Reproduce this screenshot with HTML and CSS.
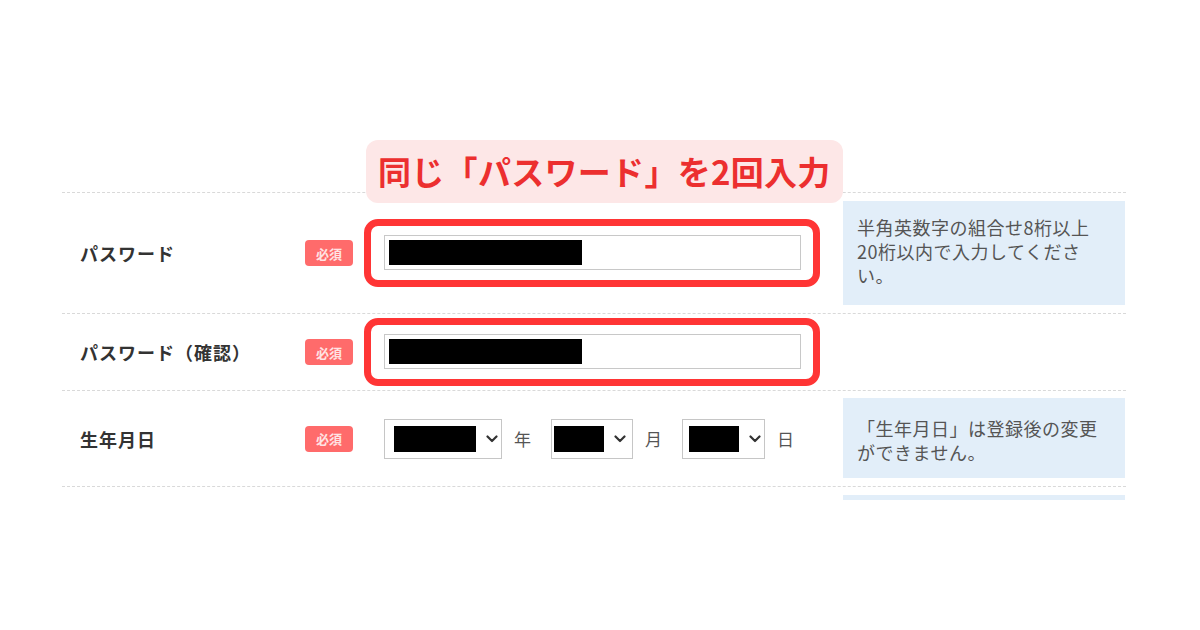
FILE: index.html
```html
<!DOCTYPE html>
<html lang="ja">
<head>
<meta charset="utf-8">
<title>パスワード入力</title>
<link rel="stylesheet" href="styles.css">
</head>
<body>
<div class="page">
  <div class="form">
    <div class="callout">同じ「パスワード」を2回入力</div>

    <div class="row row-pass">
      <div class="label">パスワード</div>
      <div class="badge-cell"><span class="badge">必須</span></div>
      <div class="field">
        <div class="highlight">
          <div class="input"><span class="mask mask-pass"></span></div>
        </div>
      </div>
      <div class="note note-pass">半角英数字の組合せ8桁以上20桁以内で入力してください。</div>
    </div>

    <div class="row row-confirm">
      <div class="label">パスワード（確認）</div>
      <div class="badge-cell"><span class="badge">必須</span></div>
      <div class="field">
        <div class="highlight">
          <div class="input"><span class="mask mask-pass"></span></div>
        </div>
      </div>
      <div class="note-empty"></div>
    </div>

    <div class="row row-birth">
      <div class="label">生年月日</div>
      <div class="badge-cell"><span class="badge">必須</span></div>
      <div class="field field-date">
        <div class="select select-year">
          <span class="mask mask-year"></span>
          <svg class="chev" width="12" height="8" viewBox="0 0 12 8"><path d="M1.5 1.5 L6 6 L10.5 1.5" fill="none" stroke="#333" stroke-width="2.2" stroke-linecap="round" stroke-linejoin="round"/></svg>
        </div>
        <span class="unit">年</span>
        <div class="select select-md select-month">
          <span class="mask mask-md"></span>
          <svg class="chev" width="12" height="8" viewBox="0 0 12 8"><path d="M1.5 1.5 L6 6 L10.5 1.5" fill="none" stroke="#333" stroke-width="2.2" stroke-linecap="round" stroke-linejoin="round"/></svg>
        </div>
        <span class="unit">月</span>
        <div class="select select-md select-day">
          <span class="mask mask-md"></span>
          <svg class="chev" width="12" height="8" viewBox="0 0 12 8"><path d="M1.5 1.5 L6 6 L10.5 1.5" fill="none" stroke="#333" stroke-width="2.2" stroke-linecap="round" stroke-linejoin="round"/></svg>
        </div>
        <span class="unit">日</span>
      </div>
      <div class="note note-birth">「生年月日」は登録後の変更ができません。</div>
    </div>

    <div class="row row-next">
      <div></div><div></div><div></div>
      <div class="note-strip"></div>
    </div>
  </div>
</div>
</body>
</html>
```

FILE: styles.css
```css
* { box-sizing: border-box; }

html, body {
  margin: 0;
  padding: 0;
  background: #ffffff;
}

body {
  font-family: "Noto Sans CJK JP", "Noto Sans", sans-serif;
  color: #333;
}

.page {
  width: 1200px;
  height: 630px;
  padding-top: 192px;
}

.form {
  position: relative;
  margin-left: 62px;
  width: 1064px;
}

.callout {
  position: absolute;
  top: -52px;
  left: 304px;
  width: 477px;
  height: 63px;
  background: #fde7e7;
  border-radius: 12px;
  color: #ec2f2f;
  font-size: 33px;
  font-weight: 700;
  letter-spacing: 0.3px;
  line-height: 63px;
  padding-left: 12px;
  white-space: nowrap;
  z-index: 2;
}

.row {
  display: grid;
  grid-template-columns: 243px 59px 479px 282px;
  align-items: center;
  border-top: 1px dashed #d9d9d9;
}

.row-pass { height: 121px; }
.row-confirm { height: 77px; }
.row-birth { height: 96px; }
.row-next { height: 14px; align-items: start; }

.label {
  padding-left: 18px;
  font-size: 18px;
  font-weight: 700;
  color: #333;
  letter-spacing: 1px;
  white-space: nowrap;
}

.badge-cell { display: flex; align-items: center; }

.badge {
  display: inline-flex;
  align-items: center;
  justify-content: center;
  width: 48px;
  height: 26px;
  border-radius: 4px;
  background: #ff6b6b;
  color: #ffe3e3;
  font-size: 13px;
  font-weight: 700;
}

.field { display: flex; align-items: center; }

.highlight {
  width: 456px;
  border: 7px solid #ff3535;
  border-radius: 14px;
  padding: 9px 12px 10px 13px;
  background: #fff;
}

.input {
  height: 35px;
  border: 1px solid #c8c8c8;
  padding: 4px;
  background: #fff;
}

.mask {
  display: block;
  background: #000;
}

.mask-pass { width: 193px; height: 25px; }

.note {
  align-self: stretch;
  margin: 8px 0;
  background: #e2eef9;
  color: #555;
  font-size: 18px;
  line-height: 24px;
  letter-spacing: 0.5px;
  padding: 14px 23px 0 14px;
}

.note-birth { padding-top: 18px; margin: 7px 0 8px; }

.note-strip {
  margin-top: 8px;
  height: 5px;
  background: #e2eef9;
}

.field-date { padding-left: 20px; }

.select {
  display: flex;
  align-items: center;
  height: 40px;
  border: 1px solid #c6c6c6;
  background: #fff;
}

.select-year { width: 118px; padding-left: 9px; }
.select-md { width: 82px; }
.select-month { padding-left: 2px; }
.select-day { width: 83px; padding-left: 6px; }

.mask-year { width: 82px; height: 26px; }
.mask-md { width: 50px; height: 26px; }

.chev { margin-left: 10px; }

.unit {
  font-size: 17px;
  color: #555;
  margin: 0 20px 0 12px;
}
```
